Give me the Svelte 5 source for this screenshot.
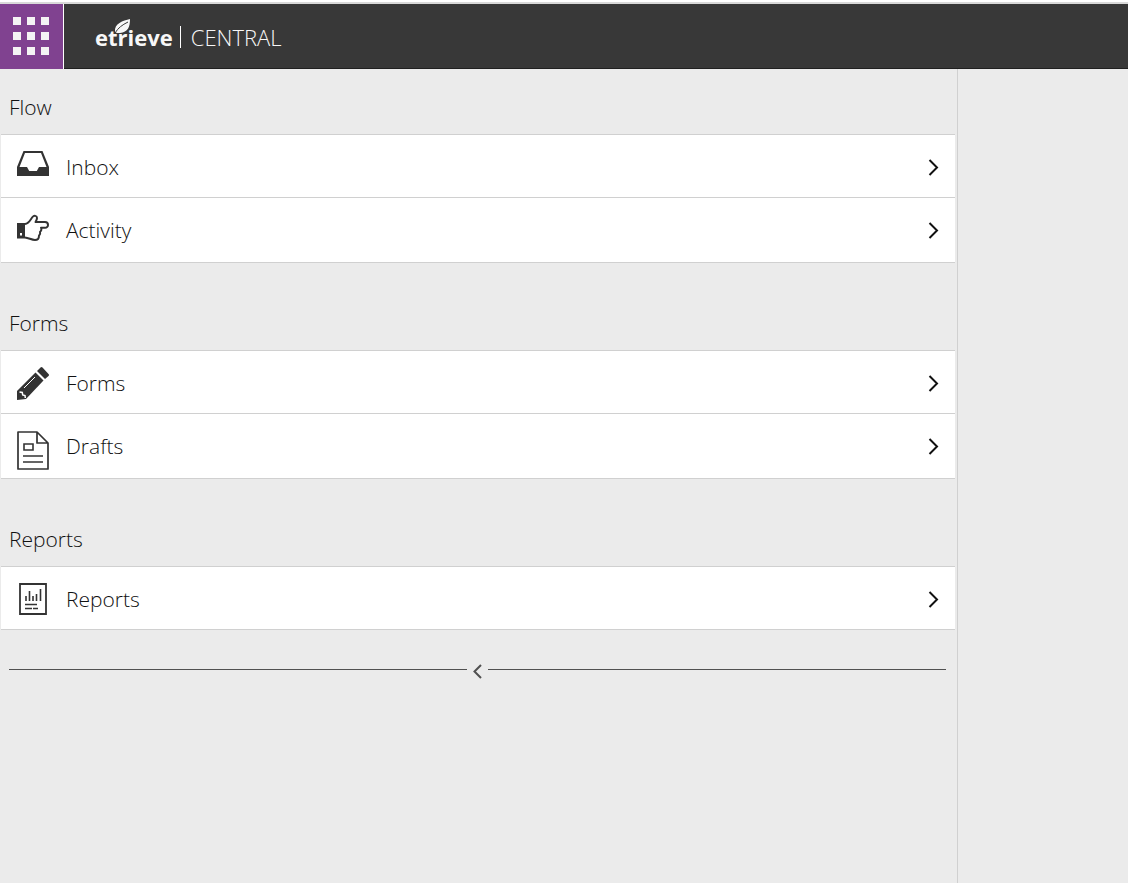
<script lang="ts">
	type Item = { label: string; icon: string };
	type Group = { title: string; items: Item[] };

	const groups: Group[] = [
		{
			title: 'Flow',
			items: [
				{ label: 'Inbox', icon: 'inbox' },
				{ label: 'Activity', icon: 'hand' }
			]
		},
		{
			title: 'Forms',
			items: [
				{ label: 'Forms', icon: 'pencil' },
				{ label: 'Drafts', icon: 'draft' }
			]
		},
		{
			title: 'Reports',
			items: [{ label: 'Reports', icon: 'report' }]
		}
	];

	const dots = [0, 1, 2];
</script>

{#snippet glyph(name: string)}
	{#if name === 'inbox'}
		<svg class="icon" width="32" height="26" viewBox="0 0 32 26" aria-hidden="true">
			<path
				fill-rule="evenodd"
				d="M6.5 0h19L32 16v9H0V16zM8 2 2.500 16H10l2.200 4h7.600L22 16h7.500L24 2z"
			/>
		</svg>
	{:else if name === 'hand'}
		<svg class="icon" width="32" height="28" viewBox="0 -1 32 28" aria-hidden="true">
			<path fill-rule="evenodd" d="M0 8h8v15.500H0zM3 18v2.500h2V18z" />
			<path
				class="stroke"
				stroke-width="2"
				stroke-linejoin="round"
				d="M8 9c4-.5 5.500-4.500 7.500-7C17 .2 20 .5 20 3c0 1.500-1 3-1.500 4H28c4 0 4 5.800 0 5.800h-4c1 1.500 0 3.500-1 4 .5 1.500 0 3-1 4 0 3-1.500 4.200-4 4.200-3.500 0-6-2-10-2.500"
			/>
		</svg>
	{:else if name === 'pencil'}
		<svg class="icon" width="32" height="33" viewBox="0 0 32 33" aria-hidden="true">
			<path d="m18.500 5.500 8 8L9 32l-9 1v-9z" />
			<path d="m20 4 3.500-3.500q1-1 2 0l6 6.500q1 1 0 2L28 12z" />
			<path class="light" stroke-width="1" d="M7 21 18 10" />
			<path class="light" stroke-width="1.500" d="m2.500 25 2.800.5.4 2.500 2.300.5.3 2.500" />
		</svg>
	{:else if name === 'draft'}
		<svg class="icon" width="32" height="40" viewBox="0 -1 32 40" aria-hidden="true">
			<path class="stroke" stroke-width="1.700" stroke-linejoin="round" d="M1 1h19l11 11v26H1zM20 1v11h11" />
			<path class="stroke" stroke-width="1.600" d="M7 13h9v6H7zM6 25h20M6 31h20" />
		</svg>
	{:else}
		<svg class="icon" width="32" height="32" viewBox="0 0 32 32" aria-hidden="true">
			<path class="stroke" stroke-width="1.800" d="M3 1h26v30H3z" />
			<path
				class="stroke"
				stroke-width="1.600"
				d="M9 18v-5M12.500 18V8M16 18v-5M19.500 18v-7M23.500 18V6M8 21.500h12M8 25.500h7M16 25.500h5"
			/>
		</svg>
	{/if}
{/snippet}

<div class="page">
	<header class="topbar">
		<button class="launcher" type="button" aria-label="Open app menu">
			<svg width="36" height="38" viewBox="0 0 36 38" aria-hidden="true">
				{#each dots as row}
					{#each dots as col}
						<rect x={col * 14} y={row * 15} width="8" height="8" />
					{/each}
				{/each}
			</svg>
		</button>
		<a class="brand" href="#home">
			<span class="brand-name">
				etrieve
				<svg class="leaf" width="17" height="15" viewBox="0 0 17 15" aria-hidden="true">
					<path d="M16 0C9 2 0 4 1 13c1 1 3 1 5 1C14 13 16 8 16 0z" />
					<path class="vein" d="M1 14C4 9 8 6 14 3" />
				</svg>
			</span>
			<span class="brand-app">CENTRAL</span>
		</a>
	</header>

	<div class="body">
		<nav class="menu" aria-label="Main">
			{#each groups as group}
				<section class="group">
					<h2>{group.title}</h2>
					<ul>
						{#each group.items as item}
							<li>
								<a href="#{item.label.toLowerCase()}">
									<span class="icon-box">{@render glyph(item.icon)}</span>
									<span class="label">{item.label}</span>
									<svg class="chevron" width="11" height="18" viewBox="0 0 11 18" aria-hidden="true">
										<path d="m1.500 2 7.500 7.500-7.500 7.500" />
									</svg>
								</a>
							</li>
						{/each}
					</ul>
				</section>
			{/each}
			<button class="collapse" type="button" aria-label="Collapse menu">
				<span class="rule"></span>
				<svg width="9" height="18" viewBox="0 0 9 18" aria-hidden="true">
					<path d="M8 5 1.500 11.500 8 18" />
				</svg>
				<span class="rule"></span>
			</button>
		</nav>
		<main class="content"></main>
	</div>
</div>

<style>
	:global(body) {
		background: #ebebeb;
	}

	.page {
		display: flex;
		flex-direction: column;
		min-height: 100vh;
		box-sizing: border-box;
		border-top: 2px solid #fff;
		font-family: 'Open Sans', 'Noto Sans', sans-serif;
		font-weight: 300;
		color: #111;
	}

	/* Top bar */
	.topbar {
		display: flex;
		height: 65px;
		border-top: 2px solid #d9d9d9;
		background: #383838;
		box-shadow: inset 0 -1px #202020;
	}

	.launcher {
		display: flex;
		width: 64px;
		padding: 13px 0 0 13px;
		border: 0;
		border-right: 1px solid #fff;
		background: #804290;
		fill: #f4f4f4;
		cursor: pointer;
	}

	.brand {
		display: flex;
		align-items: center;
		padding: 0 0 0 31px;
		color: #f7f7f7;
		text-decoration: none;
		line-height: 22px;
	}

	.brand-name {
		position: relative;
		padding-right: 7px;
		border-right: 1px solid #fff;
		font-size: 22px;
		font-weight: 700;
	}

	.leaf {
		position: absolute;
		top: -7px;
		left: 19px;
		fill: #f7f7f7;
	}

	.vein {
		fill: none;
		stroke: #383838;
		stroke-width: 1;
	}

	.brand-app {
		padding-left: 10px;
		font-size: 22px;
	}

	/* Menu */
	.body {
		display: flex;
		flex: 1;
	}

	.menu {
		flex: 1;
		padding: 0 2px 0 1px;
		border-right: 1px solid #d0d0d0;
	}

	.content {
		width: 170px;
	}

	.group + .group {
		padding-top: 22px;
	}

	h2 {
		margin: 0;
		padding: 23px 8px 12px;
		font-size: 21px;
		font-weight: inherit;
		line-height: 30px;
	}

	ul {
		margin: 0;
		padding: 0;
		border-bottom: 1px solid #d0d0d0;
		background: #fff;
		list-style: none;
	}

	li {
		border-top: 1px solid #d0d0d0;
	}

	li + li {
		padding-bottom: 2px;
	}

	li a {
		display: flex;
		align-items: center;
		height: 60px;
		padding: 2px 16px 0;
		color: inherit;
		text-decoration: none;
	}

	.icon-box {
		display: flex;
		align-self: flex-start;
		width: 32px;
		padding: 14px 17px 0 0;
	}

	.icon {
		fill: #333;
	}

	.stroke {
		fill: none;
		stroke: #333;
	}

	.light {
		fill: none;
		stroke: #fff;
	}

	.label {
		flex: 1;
		font-size: 21px;
		line-height: 30px;
	}

	.chevron {
		fill: none;
		stroke: #111;
		stroke-width: 2;
	}

	/* Collapse handle */
	.collapse {
		display: flex;
		align-items: center;
		gap: 6px;
		width: 100%;
		padding: 30px 9px 10px 8px;
		border: 0;
		background: none;
		cursor: pointer;
	}

	.collapse svg {
		overflow: visible;
		fill: none;
		stroke: #505050;
		stroke-width: 2;
	}

	.rule {
		flex: 1;
		height: 1px;
		background: #505050;
	}
</style>
